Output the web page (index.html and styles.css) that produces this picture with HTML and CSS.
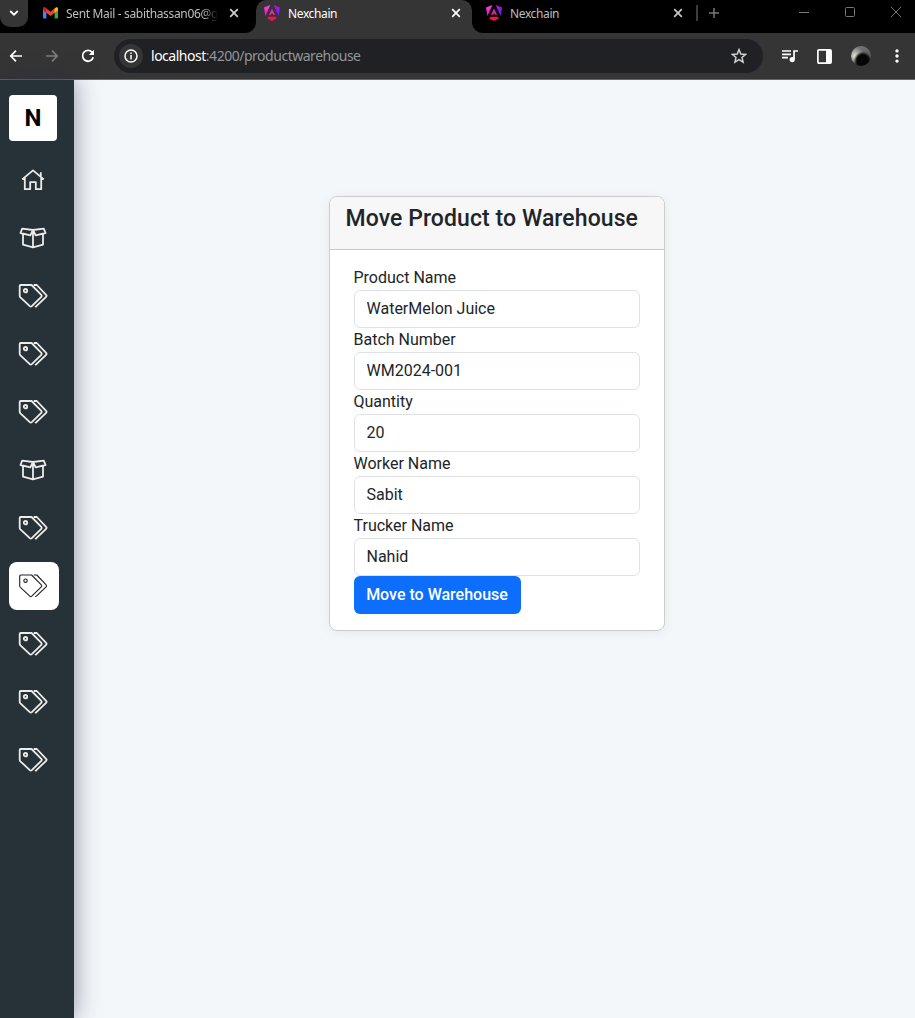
FILE: index.html
```
<!DOCTYPE html>
<html lang="en">
<head>
<meta charset="utf-8">
<title>Nexchain</title>
<link rel="stylesheet" href="styles.css">
</head>
<body>
<svg width="0" height="0" class="defs">
  <defs>
    <linearGradient id="ng-left" x1="0" y1="0" x2="0" y2="1"><stop offset="0" stop-color="#ff41f8"/><stop offset="1" stop-color="#f0109b"/></linearGradient>
    <linearGradient id="ng-right" x1="0" y1="0" x2="0" y2="1"><stop offset="0" stop-color="#b416d8"/><stop offset="1" stop-color="#6c18ff"/></linearGradient>
    <symbol id="angular" viewBox="0 0 16 16">
      <path d="M0 2.6 6.3 0 1.4 11.2z" fill="url(#ng-left)"/>
      <path d="M16 2.6 9.7 0 14.6 11.2z" fill="url(#ng-right)"/>
      <path d="M8 3.6 11 10H9.5L8.9 8.8H7.1L6.5 10H5z" fill="#e528ad"/>
      <path d="M4.2 11.8h7.6l.8 1.6L8 16l-4.6-2.6z" fill="#fa1049"/>
    </symbol>
    <symbol id="x" viewBox="0 0 10 10"><path d="M1.2 1.2 8.8 8.8M8.8 1.2 1.2 8.8" fill="none" stroke="currentColor" stroke-width="1.7"/></symbol>
    <symbol id="tags" viewBox="0 0 30 26">
      <path d="M1.7 3q0-1 1-1H13.6L23.3 11.8q1 1 0 2L13.8 23.2q-1 .9-2 0L2.4 14.3q-.7-.7-.7-1.6z"/>
      <path d="M15.7 2H18.8L28.1 11.8q1 1 0 2L18.4 23.2q-.7.6-1.3 0"/>
      <circle cx="7.5" cy="7.7" r="1.7"/>
    </symbol>
    <symbol id="box" viewBox="0 0 30 26">
      <path d="M4.2 3.7 15 5 12.3 10.3 2.5 8zM25.8 3.7 15 5 17.7 10.3 27.5 8zM5 9.1V19.7L15 22.3 25 19.7V9.1M15 5V22.3"/>
    </symbol>
    <symbol id="home" viewBox="0 0 30 26">
      <path d="M4.2 12.4 15 3.4 25.8 12.4M6.8 10.8V22.2H12.2V15.2H17.8V22.2H23.2V10.8M22.8 9.2V5.2"/>
    </symbol>
  </defs>
</svg>
<div class="browser">
  <div class="tabstrip">
    <div class="tab-search"><svg width="10" height="8" viewBox="0 0 10 8"><path d="M1.2 2 5 5.7 8.8 2" fill="none" stroke="#fff" stroke-width="1.8"/></svg></div>
    <div class="tab tab-mail">
      <svg class="favicon" width="15" height="12" viewBox="0 0 15 12">
        <path d="M0 2h3.4v9.5H1q-1 0-1-1z" fill="#4285f4"/><path d="M11.6 2H15v8.5q0 1-1 1h-2.4z" fill="#34a853"/>
        <path d="M0 2Q0 0 2 .4L7.5 4.7 13 .4Q15 0 15 2v1.3L7.5 9 0 3.3z" fill="#ea4335"/>
        <path d="M11.6 1.5 13 .4Q15 0 15 2v1.3l-3.4 2.6z" fill="#fbbc04"/><path d="M0 2Q0 0 2 .4l1.4 1.1v4.4L0 3.3z" fill="#c5221f"/>
      </svg>
      <span class="tab-title">Sent Mail - sabithassan06@g</span>
      <svg class="close" width="10" height="10"><use href="#x"/></svg>
    </div>
    <div class="tab tab-active">
      <svg class="favicon" width="16" height="16"><use href="#angular"/></svg>
      <span class="tab-title">Nexchain</span>
      <svg class="close" width="10" height="10"><use href="#x"/></svg>
    </div>
    <div class="tab tab-last">
      <svg class="favicon" width="16" height="16"><use href="#angular"/></svg>
      <span class="tab-title">Nexchain</span>
      <svg class="close" width="10" height="10"><use href="#x"/></svg>
    </div>
    <div class="separator"></div>
    <svg class="plus" width="12" height="12" viewBox="0 0 12 12"><path d="M6 1v10M1 6h10" stroke="#777" stroke-width="1.5"/></svg>
    <svg class="window-buttons" width="104" height="12" viewBox="0 0 104 12" fill="none" stroke="#777"><path d="M0 6.5h10M92 1l10 10M102 1 92 11"/><rect x="46.5" y="1.5" width="9" height="9" rx="1"/></svg>
  </div>
  <div class="toolbar">
    <div class="nav">
      <svg width="14" height="14" viewBox="0 0 14 14" fill="none" stroke="#fff" stroke-width="1.7"><path d="M13 7H2M7 1.7 1.8 7 7 12.3"/></svg>
      <svg width="14" height="14" viewBox="0 0 14 14" fill="none" stroke="#7e7e7e" stroke-width="1.7"><path d="M1 7h11M7 1.7 12.2 7 7 12.3"/></svg>
      <svg width="14" height="14" viewBox="0 0 14 14"><path d="M12.2 8.3A5.4 5.4 0 1 1 11 3.2L12 4.5" fill="none" stroke="#fff" stroke-width="1.8"/><path d="M13 .8V6H7.8z" fill="#fff"/></svg>
    </div>
    <div class="address">
      <div class="info"><svg width="14" height="14" viewBox="0 0 14 14"><circle cx="7" cy="7" r="6" fill="none" stroke="#fff" stroke-width="1.5"/><path d="M7 6v4.4M7 3.5v1.6" stroke="#fff" stroke-width="1.5"/></svg></div>
      <div class="url"><span class="host">localhost</span>:4200/productwarehouse</div>
      <svg class="star" width="16" height="16" viewBox="0 0 16 16"><path d="M8 1.6 9.8 6l4.8.4L11 9.5l1.1 4.7L8 11.7l-4.1 2.5L5 9.5 1.4 6.4 6.2 6z" fill="none" stroke="#d0d0d0" stroke-width="1.5"/></svg>
    </div>
    <svg class="media" width="16" height="14" viewBox="0 0 16 14"><path d="M0 2h9M0 5.3h9M0 8.6h6M12 10V2h4" fill="none" stroke="#fff" stroke-width="1.7"/><circle cx="10.2" cy="10.6" r="2.6" fill="#fff"/></svg>
    <svg class="panel" width="15" height="15" viewBox="0 0 15 15"><rect x=".9" y=".9" width="13.2" height="13.2" rx="1" fill="none" stroke="#fff" stroke-width="1.7"/><path d="M9 1h5v13H9z" fill="#fff"/></svg>
    <div class="avatar"></div>
    <svg class="more" width="4" height="14" viewBox="0 0 4 14" fill="#fff"><circle cx="2" cy="1.9" r="1.7"/><circle cx="2" cy="7" r="1.7"/><circle cx="2" cy="12.1" r="1.7"/></svg>
  </div>
</div>
<div class="app">
  <nav class="sidebar">
    <div class="logo">N</div>
    <a class="item"><svg><use href="#home"/></svg></a>
    <a class="item"><svg><use href="#box"/></svg></a>
    <a class="item"><svg><use href="#tags"/></svg></a>
    <a class="item"><svg><use href="#tags"/></svg></a>
    <a class="item"><svg><use href="#tags"/></svg></a>
    <a class="item"><svg><use href="#box"/></svg></a>
    <a class="item"><svg><use href="#tags"/></svg></a>
    <a class="item active"><svg><use href="#tags"/></svg></a>
    <a class="item"><svg><use href="#tags"/></svg></a>
    <a class="item"><svg><use href="#tags"/></svg></a>
    <a class="item"><svg><use href="#tags"/></svg></a>
  </nav>
  <main class="content">
    <section class="card">
      <header class="card-header"><h1>Move Product to Warehouse</h1></header>
      <form class="card-body">
        <label for="product">Product Name</label>
        <input id="product" value="WaterMelon Juice">
        <label for="batch">Batch Number</label>
        <input id="batch" value="WM2024-001">
        <label for="quantity">Quantity</label>
        <input id="quantity" value="20">
        <label for="worker">Worker Name</label>
        <input id="worker" value="Sabit">
        <label for="trucker">Trucker Name</label>
        <input id="trucker" value="Nahid">
        <button type="button">Move to Warehouse</button>
      </form>
    </section>
  </main>
</div>
</body>
</html>
```
FILE: styles.css
```
* { box-sizing: border-box; }
html, body { height: 100%; }
body { margin: 0; overflow: hidden; display: flex; flex-direction: column; font-family: Roboto, sans-serif; color: #212529; }
svg { display: block; flex: none; }
.defs { position: absolute; }

/* Browser chrome */
.browser { flex: none; background: #353535; border-bottom: 1px solid #666; height: 80px; font-family: "Noto Sans", sans-serif; }
.tabstrip { height: 33px; display: flex; background: #353535; }
.tab-search { width: 28px; height: 27px; background: #353535; border-radius: 0 0 10px 10px; display: flex; justify-content: center; padding-top: 9px; box-shadow: 0 0 0 30px #000; clip-path: inset(0 0 -6px 0); }
.tab { display: flex; height: 33px; font-size: 12px; line-height: 28px; color: #bfbfbf; background: #000; }
.favicon { margin-top: 5px; }
.tab-title { flex: 1; margin-left: 8px; white-space: nowrap; letter-spacing: -.38px; }
.close { margin-top: 8px; }
.tab-mail { width: 228px; padding: 0 17px 0 15px; border-radius: 0 0 11px 0; }
.tab-mail .favicon { margin-top: 7px; }
.tab-mail .tab-title { flex: none; width: 152px; letter-spacing: -.34px; -webkit-mask-image: linear-gradient(90deg, #000 90%, transparent); mask-image: linear-gradient(90deg, #000 90%, transparent); }
.tab-mail .close { margin-left: auto; color: #d0d0d0; }
.tab-active { width: 216px; padding: 0 16px 0 8px; background: linear-gradient(#000, #000) 0 0 / 100% 12px no-repeat, #353535; color: #fff; position: relative; z-index: 0; }
.tab-active::before { content: ""; position: absolute; inset: 0; z-index: -1; background: #353535; border-radius: 10px 10px 0 0; }
.tab-active { padding-right: 11px; }
.tab-last { width: 221px; padding: 0 10px 0 14px; border-radius: 0 0 0 11px; }
.tab-last .close { color: #c8c8c8; }
.separator { width: 8px; background: linear-gradient(#3c3c3c, #3c3c3c) 3px 5px / 2px 16px no-repeat, #000; }
.plus { box-sizing: content-box; padding: 7px 78px 14px 7px; background: #000; }
.window-buttons { box-sizing: content-box; flex: 1; padding: 6px 12px 15px 1px; background: #000; }
.toolbar { height: 46px; display: flex; align-items: center; }
.nav { width: 114px; padding-left: 9px; display: flex; gap: 22px; }
.address { width: 649px; height: 34px; border-radius: 17px; background: #202124; display: flex; align-items: center; padding: 0 16px 0 5px; }
.info { width: 24px; height: 24px; border-radius: 50%; background: #353535; display: grid; place-items: center; }
.url { margin-left: 8px; padding-bottom: 1px; flex: 1; font-size: 14px; color: #929699; letter-spacing: -.48px; white-space: nowrap; }
.host { color: #fff; }
.media { margin-left: 19px; }
.panel { margin-left: 19px; }
.avatar { margin-left: 19px; width: 20px; height: 20px; border-radius: 50%; background: radial-gradient(circle at 58% 72%, #060606 0 31%, transparent 48%), radial-gradient(circle at 20% 50%, #d2d3c8 0 8%, transparent 50%), linear-gradient(#777, #555 55%, #151515); }
.more { margin-left: 24px; }

/* Application */
.app { flex: 1; display: flex; background: #f3f7fa; }
.sidebar { width: 74px; padding: 15px 9px; display: flex; flex-direction: column; background: #273238; box-shadow: 0 0 24px rgba(40, 42, 73, .5); color: #ececea; }
.logo { width: 48px; height: 46px; margin-bottom: 15px; border-radius: 4px; background: #fff; color: #000; font: 700 24px/46px Roboto, sans-serif; text-align: center; }
.item { width: 50px; height: 48px; margin-bottom: 10px; border-radius: 8px; padding: 11px 11px 11px 9px; flex: none; }
.item svg { width: 30px; height: 26px; fill: none; stroke: currentColor; stroke-width: 1.8; stroke-linejoin: round; }
.item.active { background: #fff; color: #202020; }
.item.active svg { stroke-width: 1.1; }
.content { flex: 1; display: flex; justify-content: center; align-items: flex-start; padding: 116px 0 0 5px; }
.card { width: 336px; height: 435px; background: #fff; border: 1px solid #cbcecf; border-radius: 8px; box-shadow: 0 2px 12px rgba(0, 0, 0, .06); overflow: hidden; }
.card-header { height: 53px; padding: 8px 15.5px; background: #f7f7f7; border-bottom: 1px solid #c9c9c9; }
h1 { margin: 0; font-size: 23px; font-weight: 500; line-height: 28px; letter-spacing: .08px; white-space: nowrap; }
.card-body { padding: 16px 24px; display: flex; flex-direction: column; font-size: 16px; line-height: 24px; }
label { height: 24px; margin-left: -.5px; }
input { width: 286px; height: 38px; padding: 5px 11.5px 7px; border: 1px solid #dee2e6; border-radius: 6px; font: 400 16px/24px Roboto, sans-serif; color: #212529; background: #fff; }
button { align-self: flex-start; width: 167px; height: 38px; padding: 0 1px 0 0; border: 0; border-radius: 6px; background: #0d6efd; color: #fff; font: 500 16px/38px Roboto, sans-serif; }
```
